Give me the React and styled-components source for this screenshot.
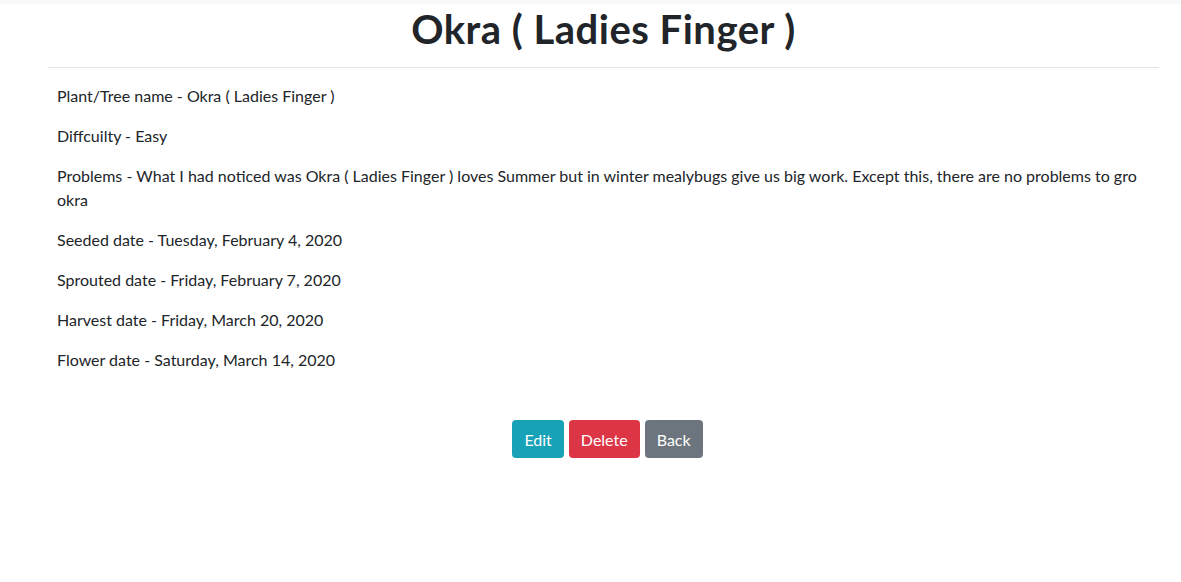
import styled, { createGlobalStyle } from "styled-components";

const GlobalStyle = createGlobalStyle`
  body {
    margin: 0;
    background: #fff;
    color: #212529;
    font-family: Lato, "Open Sans", sans-serif;
    font-size: 16px;
    line-height: 1.5;
  }
`;

const TopStrip = styled.div`
  height: 4px;
  background-color: #f8f9fa;
`;

const Page = styled.div`
  margin: 0 22px 0 48px;
`;

const Title = styled.h1`
  margin: 1px 0 0;
  height: 62px;
  font-size: 40px;
  font-weight: 700;
  line-height: 48px;
  letter-spacing: 0.5px;
  text-align: center;
`;

const Rule = styled.hr`
  margin: 0;
  border: 0;
  border-top: 1px solid #e2e3e5;
`;

const Details = styled.div`
  padding: 16px 8px 0 9px;
`;

const Line = styled.p`
  margin: 0 0 16px;
`;

const Actions = styled.div`
  display: flex;
  justify-content: center;
  gap: 5px;
  padding: 32px 0 0 8px;
`;

const COLORS = {
  info: "#17a2b8",
  danger: "#dc3545",
  secondary: "#6c757d",
};

const Button = styled.button`
  height: 38px;
  padding: 0 12px;
  border: none;
  border-radius: 4px;
  background-color: ${(p) => COLORS[p.$variant]};
  color: #fff;
  font-family: inherit;
  font-size: 16px;
  cursor: pointer;
`;

const plant = {
  name: "Okra ( Ladies Finger )",
  difficulty: "Easy",
  problems:
    "What I had noticed was Okra ( Ladies Finger ) loves Summer but in winter mealybugs give us big work. Except this, there are no problems to gro okra",
  seeded: "Tuesday, February 4, 2020",
  sprouted: "Friday, February 7, 2020",
  harvest: "Friday, March 20, 2020",
  flower: "Saturday, March 14, 2020",
};

const App = () => {
  return (
    <>
      <GlobalStyle />
      <TopStrip />
      <Page>
        <Title>{plant.name}</Title>
        <Rule />
        <Details>
          <Line>Plant/Tree name - {plant.name}</Line>
          <Line>Diffcuilty - {plant.difficulty}</Line>
          <Line>Problems - {plant.problems}</Line>
          <Line>Seeded date - {plant.seeded}</Line>
          <Line>Sprouted date - {plant.sprouted}</Line>
          <Line>Harvest date - {plant.harvest}</Line>
          <Line>Flower date - {plant.flower}</Line>
        </Details>
        <Actions>
          <Button $variant="info">Edit</Button>
          <Button $variant="danger">Delete</Button>
          <Button $variant="secondary">Back</Button>
        </Actions>
      </Page>
    </>
  );
};

export default App;
